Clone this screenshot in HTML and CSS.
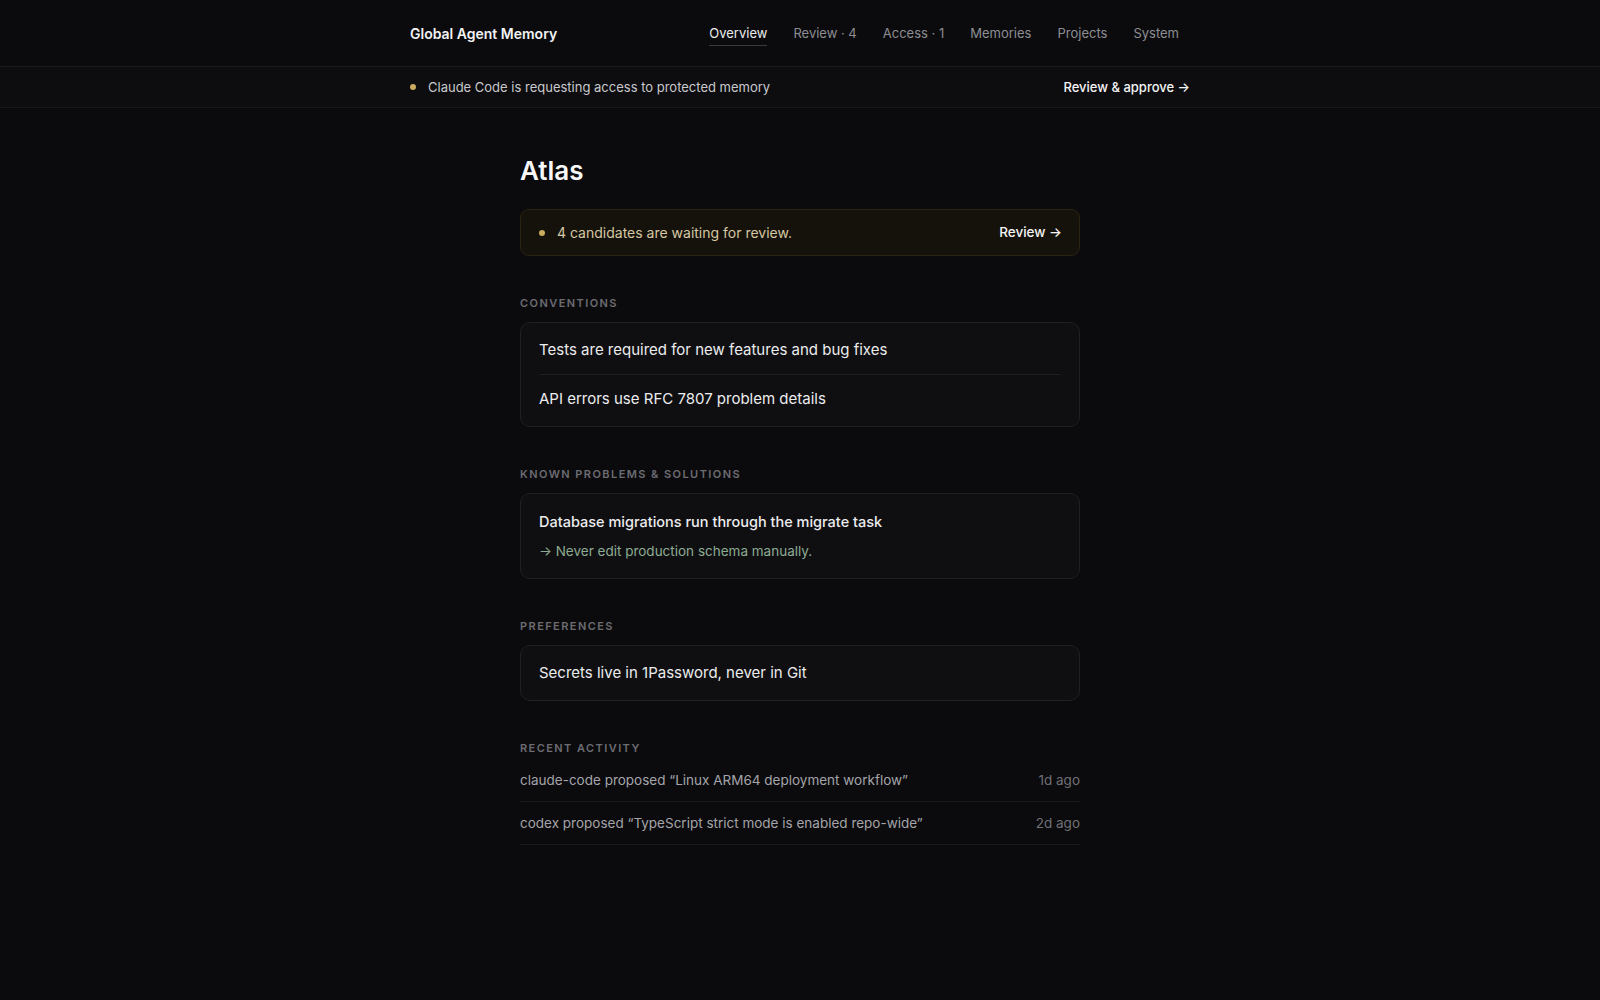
FILE: index.html
```html
<!DOCTYPE html>
<html lang="en">
<head>
    <meta charset="UTF-8">
    <meta name="viewport" content="width=device-width, initial-scale=1.0">
    <title>Atlas · Global Agent Memory</title>
    <link rel="stylesheet" href="styles.css">
</head>
<body>
    <header class="topbar">
        <div class="topbar-inner">
            <a class="brand" href="#">Global Agent Memory</a>
            <nav class="nav">
                <a class="nav-link active" href="#">Overview</a>
                <a class="nav-link" href="#">Review · 4</a>
                <a class="nav-link" href="#">Access · 1</a>
                <a class="nav-link" href="#">Memories</a>
                <a class="nav-link" href="#">Projects</a>
                <a class="nav-link" href="#">System</a>
            </nav>
        </div>
    </header>

    <div class="access-banner">
        <div class="access-inner">
            <span class="dot"></span>
            <span class="access-text">Claude Code is requesting access to protected memory</span>
            <a class="access-link" href="#">Review &amp; approve →</a>
        </div>
    </div>

    <main class="project">
        <h1 class="project-title">Atlas</h1>

        <div class="notice">
            <span class="dot"></span>
            <span class="notice-text">4 candidates are waiting for review.</span>
            <a class="notice-link" href="#">Review →</a>
        </div>

        <section class="section">
            <h2 class="section-label">Conventions</h2>
            <ul class="card">
                <li class="card-item">Tests are required for new features and bug fixes</li>
                <li class="card-item">API errors use RFC 7807 problem details</li>
            </ul>
        </section>

        <section class="section">
            <h2 class="section-label">Known problems &amp; solutions</h2>
            <ul class="card">
                <li class="problem">
                    <p class="problem-title">Database migrations run through the migrate task</p>
                    <p class="problem-fix">→ Never edit production schema manually.</p>
                </li>
            </ul>
        </section>

        <section class="section">
            <h2 class="section-label">Preferences</h2>
            <ul class="card">
                <li class="card-item">Secrets live in 1Password, never in Git</li>
            </ul>
        </section>

        <section class="section">
            <h2 class="section-label activity-label">Recent activity</h2>
            <ul class="activity">
                <li class="activity-row">
                    <span>claude-code proposed “Linux ARM64 deployment workflow”</span>
                    <span class="activity-time">1d ago</span>
                </li>
                <li class="activity-row">
                    <span>codex proposed “TypeScript strict mode is enabled repo-wide”</span>
                    <span class="activity-time">2d ago</span>
                </li>
            </ul>
        </section>
    </main>
</body>
</html>
```

FILE: styles.css
```css
* {
    box-sizing: border-box;
}
body {
    margin: 0;
    background-color: #0b0b0d;
    color: #e8e8ea;
    font-family: 'Inter', 'Noto Sans', sans-serif;
    font-size: 13px;
}
a {
    color: inherit;
    text-decoration: none;
}
ul {
    list-style: none;
    margin: 0;
    padding: 0;
}
p {
    margin: 0;
}

/* top navigation */
.topbar {
    height: 67px;
    border-bottom: 1px solid #1a1a1d;
}
.topbar-inner {
    max-width: 780px;
    height: 100%;
    margin: 0 auto;
    display: flex;
    align-items: center;
    justify-content: space-between;
}
.brand {
    font-size: 14px;
    font-weight: 600;
    color: #f2f2f4;
}
.nav {
    display: flex;
    align-items: center;
    margin-right: -2px;
}
.nav-link {
    position: relative;
    padding: 4px 13px;
    line-height: 20px;
    color: #8e8e94;
}
.nav-link.active {
    color: #ececee;
}
.nav-link.active::after {
    content: '';
    position: absolute;
    left: 13px;
    right: 13px;
    bottom: 1px;
    height: 1px;
    background-color: #3a3a3f;
}

/* access request strip */
.access-banner {
    background-color: #0d0d0f;
    border-bottom: 1px solid #18181b;
}
.access-inner {
    max-width: 780px;
    height: 40px;
    margin: 0 auto;
    display: flex;
    align-items: center;
}
.dot {
    width: 6px;
    height: 6px;
    border-radius: 50%;
    background-color: #c9aa5e;
    flex-shrink: 0;
}
.access-inner .dot {
    margin-right: 12px;
}
.access-text {
    flex: 1;
    color: #c9c9cd;
}
.access-link {
    color: #f4f4f5;
    font-weight: 500;
}

/* project page */
.project {
    max-width: 560px;
    margin: 0 auto;
    padding: 47px 0 80px;
}
.project-title {
    margin: 0 0 22px;
    font-size: 26px;
    line-height: 32px;
    font-weight: 600;
    color: #f7f7f8;
}
.notice {
    display: flex;
    align-items: center;
    padding: 12px 17px 12px 18px;
    line-height: 21px;
    background-color: #15120b;
    border: 1px solid #2b2413;
    border-radius: 9px;
}
.notice .dot {
    margin-right: 12px;
}
.notice-text {
    flex: 1;
    color: #d6c8a2;
    font-size: 14px;
}
.notice-link {
    color: #f4f4f5;
    font-size: 13.5px;
    font-weight: 500;
}

.section {
    margin-top: 39px;
}
.section-label {
    margin: 0 0 11px;
    font-size: 11px;
    line-height: 16px;
    font-weight: 600;
    letter-spacing: 0.13em;
    text-transform: uppercase;
    color: #6c6c72;
}
.card {
    padding: 3px 18px;
    background-color: #0f0f11;
    border: 1px solid #202023;
    border-radius: 10px;
}
.card-item {
    padding: 12px 0;
    font-size: 15px;
    line-height: 24px;
    color: #ececee;
}
.card-item + .card-item {
    border-top: 1px solid #1e1e21;
}
.problem {
    padding: 13px 0;
}
.problem-title {
    font-size: 14.5px;
    line-height: 24px;
    font-weight: 500;
    color: #ececee;
}
.problem-fix {
    margin-top: 6px;
    font-size: 13.5px;
    line-height: 22px;
    color: #8dab93;
}

.activity-label {
    margin-bottom: 3px;
}
.activity-row {
    display: flex;
    justify-content: space-between;
    padding: 10px 0;
    font-size: 13.5px;
    line-height: 22px;
    color: #a4a4aa;
    border-bottom: 1px solid #1a1a1d;
}
.activity-time {
    color: #6f6f75;
}
```
